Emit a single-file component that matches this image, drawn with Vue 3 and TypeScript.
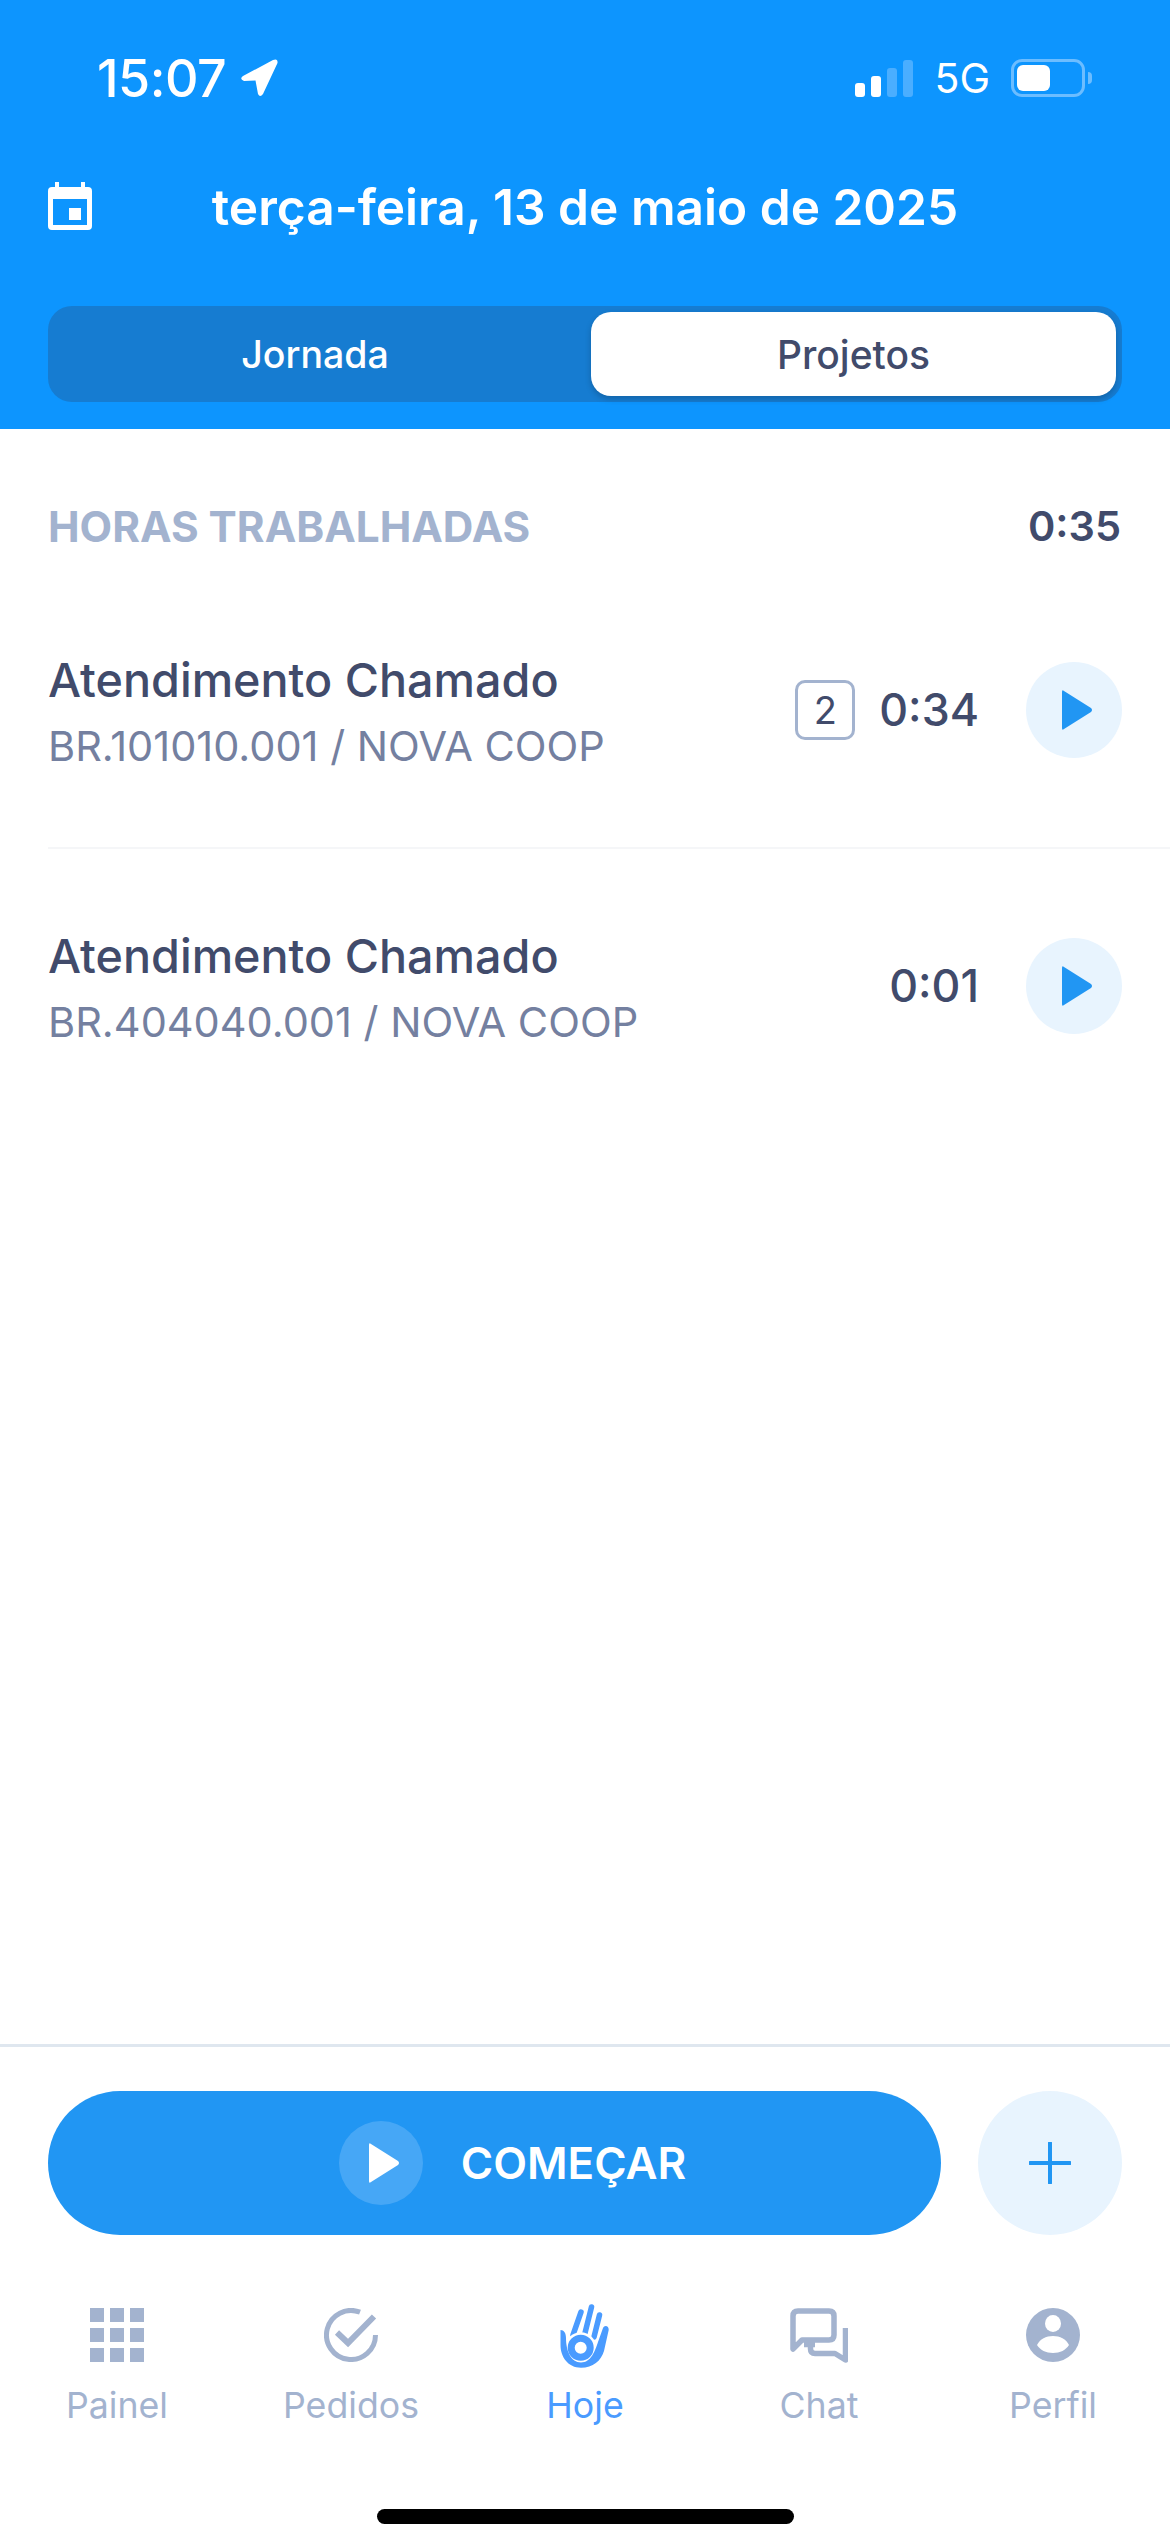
<script setup lang="ts">
const rows = [
  { id: 1, title: 'Atendimento Chamado', sub: 'BR.101010.001 / NOVA COOP', time: '0:34', badge: '2' },
  { id: 2, title: 'Atendimento Chamado', sub: 'BR.404040.001 / NOVA COOP', time: '0:01', badge: '' },
]
</script>

<template>
  <div class="page">
    <header class="header">
      <div class="status">
        <div class="status-left">
          <span class="clock">15:07</span>
          <svg class="loc" viewBox="0 0 38 38"><path d="M3 17 L33 1 Q38 -1 37.5 4 L23 35 Q20 39 18 35 L15.5 21.5 L4 22 Q-1 20 3 17 Z" fill="#fff"/></svg>
        </div>
        <div class="status-right">
          <div class="signal">
            <i class="b1"></i><i class="b2"></i><i class="b3 dim"></i><i class="b4 dim"></i>
          </div>
          <span class="net">5G</span>
          <div class="battery"><div class="fill"></div></div>
          <div class="cap"></div>
        </div>
      </div>
      <div class="date-row">
        <svg class="cal" viewBox="0 0 44 48">
          <path fill-rule="evenodd" d="M7 0h4v5h22V0h4v5h3a4 4 0 0 1 4 4v35a4 4 0 0 1-4 4H4a4 4 0 0 1-4-4V9a4 4 0 0 1 4-4h3zM5 17v26h34V17z" fill="#fff"/>
          <rect x="21" y="26" width="12" height="12" fill="#fff"/>
        </svg>
        <h1 class="date">terça-feira, 13 de maio de 2025</h1>
        <span></span>
      </div>
      <div class="segment">
        <div class="seg-item">Jornada</div>
        <div class="seg-item active">Projetos</div>
      </div>
    </header>

    <main class="content">
      <div class="summary">
        <span class="summary-label">HORAS TRABALHADAS</span>
        <span class="summary-time">0:35</span>
      </div>
      <div v-for="row in rows" :key="row.id" class="row">
        <div class="row-text">
          <div class="row-title">{{ row.title }}</div>
          <div class="row-sub">{{ row.sub }}</div>
        </div>
        <span v-if="row.badge" class="badge">{{ row.badge }}</span>
        <span class="row-time">{{ row.time }}</span>
        <button class="play">
          <svg class="tri" viewBox="0 0 30 40"><path d="M0 2 Q0 -1 2 1 L29 18 Q31 20 29 22 L2 39 Q0 41 0 38 Z" fill="#2196f3"/></svg>
        </button>
      </div>
    </main>

    <footer class="footer">
      <div class="actions">
        <button class="start">
          <span class="start-icon">
            <svg class="tri" viewBox="0 0 30 40"><path d="M0 2 Q0 -1 2 1 L29 18 Q31 20 29 22 L2 39 Q0 41 0 38 Z" fill="#fff"/></svg>
          </span>
          <span>COMEÇAR</span>
        </button>
        <button class="add">
          <svg class="plus" viewBox="0 0 42 42"><path d="M21 1V41M1 21H41" stroke="#2196f3" stroke-width="4" stroke-linecap="round"/></svg>
        </button>
      </div>
      <nav class="tabs">
        <div class="tab">
          <div class="tab-icon">
            <svg width="54" height="54" viewBox="0 0 54 54" fill="#a3b3cf">
              <rect x="0" y="0" width="14" height="14"/><rect x="20" y="0" width="14" height="14"/><rect x="40" y="0" width="14" height="14"/>
              <rect x="0" y="20" width="14" height="14"/><rect x="20" y="20" width="14" height="14"/><rect x="40" y="20" width="14" height="14"/>
              <rect x="0" y="40" width="14" height="14"/><rect x="20" y="40" width="14" height="14"/><rect x="40" y="40" width="14" height="14"/>
            </svg>
          </div>
          <span>Painel</span>
        </div>
        <div class="tab">
          <div class="tab-icon">
            <svg width="54" height="54" viewBox="0 0 54 54" fill="none" stroke="#a3b3cf" stroke-width="5">
              <path d="M36 4.2 A24.5 24.5 0 1 0 51.5 27"/>
              <path d="M13 24.5 L24 35 L50 8.5" stroke-width="6"/>
            </svg>
          </div>
          <span>Pedidos</span>
        </div>
        <div class="tab on">
          <div class="tab-icon">
            <svg width="50" height="65" viewBox="22 2 50 65" fill="none" stroke="#4a9bff">
              <path d="M35 34L43 11M46.5 34L53.5 6M56 36L61.5 14" stroke-width="5.5" stroke-linecap="round"/>
              <circle cx="42.7" cy="46.7" r="15.5" fill="#fff" stroke="none"/>
              <circle cx="42.7" cy="46.7" r="9.5" stroke-width="7"/>
              <path stroke="none" fill="#4a9bff" d="M22.5 29C26 29 28 32 28 37C28 50 33 61.5 43 61.5C53 61.5 57 50 60 41L65 27C66 24 71 24 70.7 29L66 50C63 60 55 66.7 43 66.7C30 66.7 22.5 56 22.5 44Z"/>
            </svg>
          </div>
          <span>Hoje</span>
        </div>
        <div class="tab">
          <div class="tab-icon">
            <svg width="58" height="55" viewBox="0 0 58 55" fill="none" stroke="#a3b3cf" stroke-width="5.5" stroke-linejoin="round">
              <path d="M3 41V8Q3 3 8 3H39Q44 3 44 8V27Q44 32 39 32H12Z"/>
              <path d="M55.5 20V52L45 45.5H25Q20.5 45.5 20.5 41V36.5M14 36.5H25"/>
            </svg>
          </div>
          <span>Chat</span>
        </div>
        <div class="tab">
          <div class="tab-icon">
            <svg width="54" height="54" viewBox="0 0 54 54">
              <circle cx="27" cy="27" r="27" fill="#a3b3cf"/>
              <ellipse cx="27" cy="15.5" rx="8" ry="8.5" fill="#fff"/>
              <path fill="#fff" d="M11 37C14 31 20 28 27 28C34 28 40 31 43 37C40 42 34 45 27 45C20 45 14 42 11 37Z"/>
            </svg>
          </div>
          <span>Perfil</span>
        </div>
      </nav>
      <div class="home"></div>
    </footer>
  </div>
</template>

<style scoped>
.page {
  width: 1170px;
  height: 2532px;
  display: flex;
  flex-direction: column;
  background: #fff;
  font-family: Inter, "Liberation Sans", sans-serif;
  color: #414b6b;
  overflow: hidden;
}
.header {
  height: 429px;
  box-sizing: border-box;
  background: #0d95fe;
  padding: 58px 48px 27px;
  display: flex;
  flex-direction: column;
}
.status {
  display: flex;
  justify-content: space-between;
  height: 40px;
  padding: 0 30px 0 49px;
  color: #fff;
}
.status-left {
  display: flex;
  align-items: center;
  gap: 14px;
}
.clock {
  font-size: 52px;
  font-weight: 500;
  line-height: 40px;
  letter-spacing: -0.5px;
  padding-top: 2px;
}
.loc {
  width: 38px;
  height: 38px;
}
.status-right {
  display: flex;
  align-items: center;
}
.signal {
  display: flex;
  align-items: flex-end;
  gap: 6px;
  height: 37px;
  margin-right: 21px;
}
.signal i {
  width: 10px;
  border-radius: 3px;
  background: #fff;
}
.signal .b1 { height: 14px; }
.signal .b2 { height: 21px; }
.signal .b3 { height: 29px; }
.signal .b4 { height: 37px; }
.signal .dim { background: #4aaeff; }
.net {
  font-size: 41px;
  line-height: 40px;
  font-weight: 400;
  margin-right: 21px;
}
.battery {
  width: 74px;
  height: 38px;
  box-sizing: border-box;
  border: 3px solid #6cbdff;
  border-radius: 11px;
  padding: 3px;
}
.fill {
  width: 33px;
  height: 26px;
  background: #fff;
  border-radius: 6px;
}
.cap {
  width: 4px;
  height: 12px;
  margin-left: 3px;
  background: #6cbdff;
  border-radius: 0 4px 4px 0;
}
.date-row {
  display: grid;
  grid-template-columns: 1fr auto 1fr;
  align-items: center;
  height: 48px;
  margin-top: 85px;
}
.cal {
  width: 44px;
  height: 48px;
  margin-top: -3px;
}
.date {
  margin: 0;
  font-size: 49.6px;
  line-height: 48px;
  font-weight: 600;
  color: #fff;
  white-space: nowrap;
}
.segment {
  margin-top: 75px;
  height: 96px;
  box-sizing: border-box;
  padding: 6px 6px 6px 0;
  background: #167cd1;
  border-radius: 24px;
  display: grid;
  grid-template-columns: 534px 525px;
  justify-content: space-between;
}
.seg-item {
  display: flex;
  align-items: center;
  justify-content: center;
  font-size: 37.5px;
  font-weight: 500;
  color: #fff;
}
.seg-item.active {
  background: #fff;
  color: #414b6b;
  font-size: 39px;
  border-radius: 20px;
  box-shadow: 0 3px 6px rgba(0, 0, 0, 0.2);
}
.content {
  flex: 1;
  padding: 72px 0 0 48px;
}
.summary {
  display: flex;
  justify-content: space-between;
  align-items: center;
  height: 50px;
  padding-right: 49px;
  margin-bottom: 22px;
}
.summary-label {
  font-size: 42.3px;
  font-weight: 700;
  color: #a3b3cf;
}
.summary-time {
  font-size: 41.5px;
  font-weight: 600;
}
.row {
  height: 274px;
  display: flex;
  align-items: center;
  padding-right: 48px;
  border-bottom: 2px solid #f5f6f8;
}
.row:last-child {
  border-bottom: 0;
}
.row-text {
  flex: 1;
}
.row-title {
  font-size: 46.7px;
  line-height: 60px;
  font-weight: 500;
}
.row-sub {
  font-size: 41.5px;
  line-height: 50px;
  margin-top: 11px;
  color: #7480a0;
}
.badge {
  width: 60px;
  height: 60px;
  box-sizing: border-box;
  border: 3px solid #a3b3cf;
  border-radius: 10px;
  display: flex;
  align-items: center;
  justify-content: center;
  font-size: 38px;
  margin-right: 24px;
}
.row-time {
  font-size: 44.7px;
  font-weight: 500;
  margin-right: 47px;
}
.play {
  width: 96px;
  height: 96px;
  border: 0;
  padding: 0;
  border-radius: 50%;
  background: #e8f4fe;
  display: flex;
  align-items: center;
  justify-content: center;
}
.tri {
  width: 30px;
  height: 40px;
  margin-left: 6px;
}
.footer {
  border-top: 3px solid #dfe7ef;
  display: flex;
  flex-direction: column;
  height: 488px;
  box-sizing: border-box;
}
.actions {
  display: flex;
  gap: 37px;
  padding: 44px 48px 0;
}
.start {
  width: 893px;
  height: 144px;
  border: 0;
  padding: 0 0 0 36px;
  border-radius: 72px;
  background: #2196f3;
  color: #fff;
  font-family: inherit;
  font-size: 44px;
  font-weight: 600;
  display: flex;
  align-items: center;
  justify-content: center;
  gap: 38px;
}
.start-icon {
  width: 84px;
  height: 84px;
  border-radius: 50%;
  background: #46a7f6;
  display: flex;
  align-items: center;
  justify-content: center;
}
.add {
  width: 144px;
  height: 144px;
  border: 0;
  padding: 0;
  border-radius: 50%;
  background: #e8f4fe;
  display: flex;
  align-items: center;
  justify-content: center;
}
.plus {
  width: 42px;
  height: 42px;
}
.tabs {
  display: grid;
  grid-template-columns: repeat(5, 1fr);
  margin-top: 68px;
}
.tab {
  display: flex;
  flex-direction: column;
  align-items: center;
  font-size: 35.7px;
  line-height: 44px;
  color: #a3b3cf;
}
.tab.on {
  color: #4a9bff;
}
.tab-icon {
  height: 64px;
  display: flex;
  align-items: center;
  justify-content: center;
  margin-bottom: 16px;
}
.home {
  width: 417px;
  height: 15px;
  margin: 82px auto 0;
  background: #000;
  border-radius: 8px;
}
</style>
